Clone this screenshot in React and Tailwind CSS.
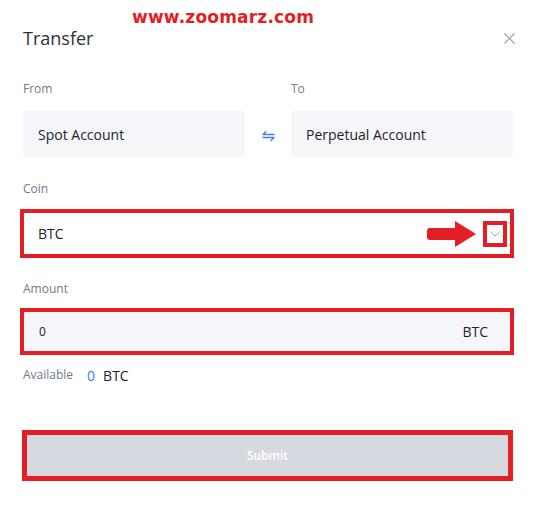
import React from 'react';

function SwapIcon() {
  return (
    <svg width="13" height="12" viewBox="0 0 13 12" fill="none" stroke="#3d7be0" strokeWidth="1.3" strokeLinecap="round" strokeLinejoin="round">
      <path d="M1 4.5H12M1 4.5L4 1.5" />
      <path d="M1 7.5H12M12 7.5L9 10.5" />
    </svg>
  );
}

function CloseIcon() {
  return (
    <svg width="11" height="11" viewBox="0 0 11 11" fill="none" stroke="#9aa0a8" strokeWidth="1.2">
      <path d="M0.5 0.5L10.5 10.5M10.5 0.5L0.5 10.5" />
    </svg>
  );
}

function RedArrow() {
  return (
    <svg width="50" height="26" viewBox="0 0 50 26">
      <path d="M3 7H28V0L49 13L28 26V19H3Q0 19 0 16V10Q0 7 3 7Z" fill="#e31e24" />
    </svg>
  );
}

export default function App() {
  return (
    <div className="relative w-[538px] h-[508px] bg-white px-[23px] font-['Open_Sans',sans-serif] text-[#1e2329]">
      {/* watermark overlay */}
      <div className="absolute top-[5px] left-[132px] font-['DejaVu_Sans',sans-serif] font-bold text-[17px] leading-[24px] text-[#e31e24] tracking-[0.2px]">
        www.zoomarz.com
      </div>

      <div className="flex items-center justify-between pt-[26px]">
        <h2 className="text-[18px] leading-[24px] text-[#2b3139]">Transfer</h2>
        <CloseIcon />
      </div>

      <div className="flex mt-[31px] text-[12px] leading-[16px] text-[#707a8a]">
        <div className="w-[222px]">From</div>
        <div className="w-[46px]" />
        <div className="w-[222px]">To</div>
      </div>

      <div className="flex mt-[14px] text-[14px]">
        <div className="w-[222px] h-[46px] bg-[#f5f6fa] flex items-center pl-[15px]">Spot Account</div>
        <div className="w-[46px] flex items-center justify-center pt-[4px]">
          <SwapIcon />
        </div>
        <div className="w-[222px] h-[46px] bg-[#f5f6fa] flex items-center pl-[15px]">Perpetual Account</div>
      </div>

      <div className="mt-[24px] text-[12px] leading-[16px] text-[#707a8a]">Coin</div>

      <div className="-ml-[3px] w-[494px] h-[49px] mt-[12px] border-[4px] border-[#e31e24] bg-white flex items-center pl-[14px] pr-[3px] text-[14px]">
        <span className="flex-1">BTC</span>
        <RedArrow />
        <div className="ml-[6px] w-[24px] h-[26px] border-[4px] border-[#e31e24] flex items-center justify-center">
          <svg width="10" height="6" viewBox="0 0 10 6" fill="none" stroke="#a0a6ae" strokeWidth="1">
            <path d="M0.5 0.5L5 5L9.5 0.5" />
          </svg>
        </div>
      </div>

      <div className="mt-[23px] text-[12px] leading-[16px] text-[#707a8a]">Amount</div>

      <div className="-ml-[3px] w-[494px] h-[47px] mt-[11px] border-[4px] border-[#e31e24] bg-[#f5f6fa] flex items-center justify-between pl-[15px] pr-[22px]">
        <span className="text-[12px]">0</span>
        <span className="text-[14px]">BTC</span>
      </div>

      <div className="flex items-center mt-[12px] h-[16px]">
        <span className="text-[12px] text-[#707a8a]">Available</span>
        <span className="ml-[14px] text-[14px] text-[#3d7be0]">0</span>
        <span className="ml-[8px] text-[14px]">BTC</span>
      </div>

      <div className="-ml-[1px] w-[491px] h-[51px] mt-[47px] border-[5px] border-[#e31e24] bg-[#d6d9df] flex items-center justify-center">
        <span className="text-[12px] font-semibold text-white">Submit</span>
      </div>
    </div>
  );
}
